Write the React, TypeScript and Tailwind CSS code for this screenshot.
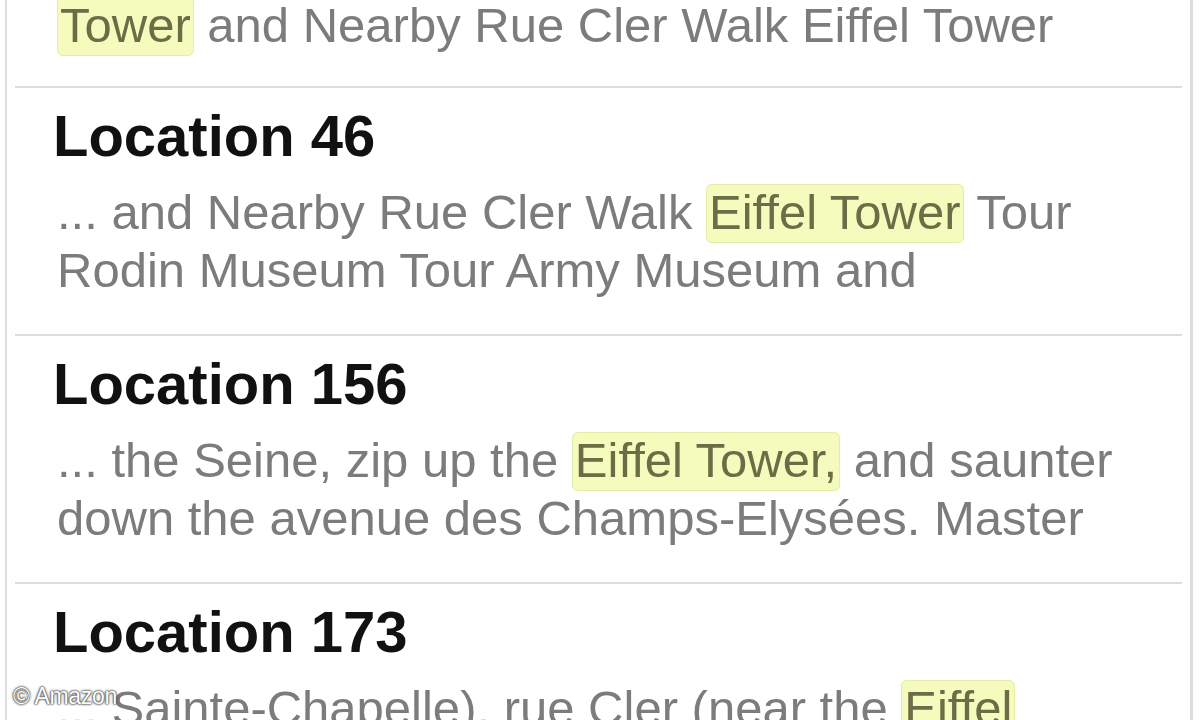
// Kindle-style search results list (scrolled)

type Part = string | { hl: string }

type Result = {
  title?: string
  lines: Part[][]
}

const results: Result[] = [
  {
    lines: [
      ['... Rodin Museum Tour Army Museum and ', { hl: 'Eiffel' }],
      [{ hl: 'Tower' }, ' and Nearby Rue Cler Walk Eiffel Tower'],
    ],
  },
  {
    title: 'Location 46',
    lines: [
      ['... and Nearby Rue Cler Walk ', { hl: 'Eiffel Tower' }, ' Tour'],
      ['Rodin Museum Tour Army Museum and'],
    ],
  },
  {
    title: 'Location 156',
    lines: [
      ['... the Seine, zip up the ', { hl: 'Eiffel Tower,' }, ' and saunter'],
      ['down the avenue des Champs-Elysées. Master'],
    ],
  },
  {
    title: 'Location 173',
    lines: [
      ['... Sainte-Chapelle), rue Cler (near the ', { hl: 'Eiffel' }],
      [{ hl: 'Tower' }, ', and the Louvre Museum'],
    ],
  },
]

function Line({ parts }: { parts: Part[] }) {
  return (
    <div className="whitespace-pre text-[49px] leading-[58px] h-[58px] text-[#7c7c7c]">
      {parts.map((p, i) =>
        typeof p === 'string' ? (
          <span key={i}>{p}</span>
        ) : (
          <span
            key={i}
            className="rounded-md border border-[#e6eda6] bg-[#f4fbbd] px-[2px] pb-[3px] text-[#6b6d47]"
          >
            {p.hl}
          </span>
        )
      )}
    </div>
  )
}

export default function App() {
  return (
    <div
      className="relative h-[720px] w-[1200px] overflow-hidden bg-white"
      style={{ fontFamily: '"Liberation Sans", Arial, Helvetica, sans-serif' }}
    >
      <div className="ml-[5px] flex h-full w-[1188px] flex-col border-l-2 border-r-[3px] border-[#dedede]">
        {results.map((r, i) =>
          i === 0 ? (
            <div key={i} className="-mt-[62px] shrink-0 pb-[32px] pl-[50px]">
              {r.lines.map((l, j) => (
                <Line key={j} parts={l} />
              ))}
            </div>
          ) : (
            <div key={i} className="mx-[8px] shrink-0 border-t-2 border-[#dddddd] pb-[35px] pt-[16px]">
              <div className="pl-[38px] text-[58px] font-bold leading-[64px] h-[64px] text-[#111111]">
                {r.title}
              </div>
              <div className="mt-[15px] pl-[42px]">
                {r.lines.map((l, j) => (
                  <Line key={j} parts={l} />
                ))}
              </div>
            </div>
          )
        )}
      </div>

      <div className="absolute bottom-[12px] left-[13px] text-[23px] leading-none tracking-[-0.3px] text-white [text-shadow:0_0_3px_#444,0_0_2px_#444,0_0_1px_#222]">
        © Amazon
      </div>
    </div>
  )
}
